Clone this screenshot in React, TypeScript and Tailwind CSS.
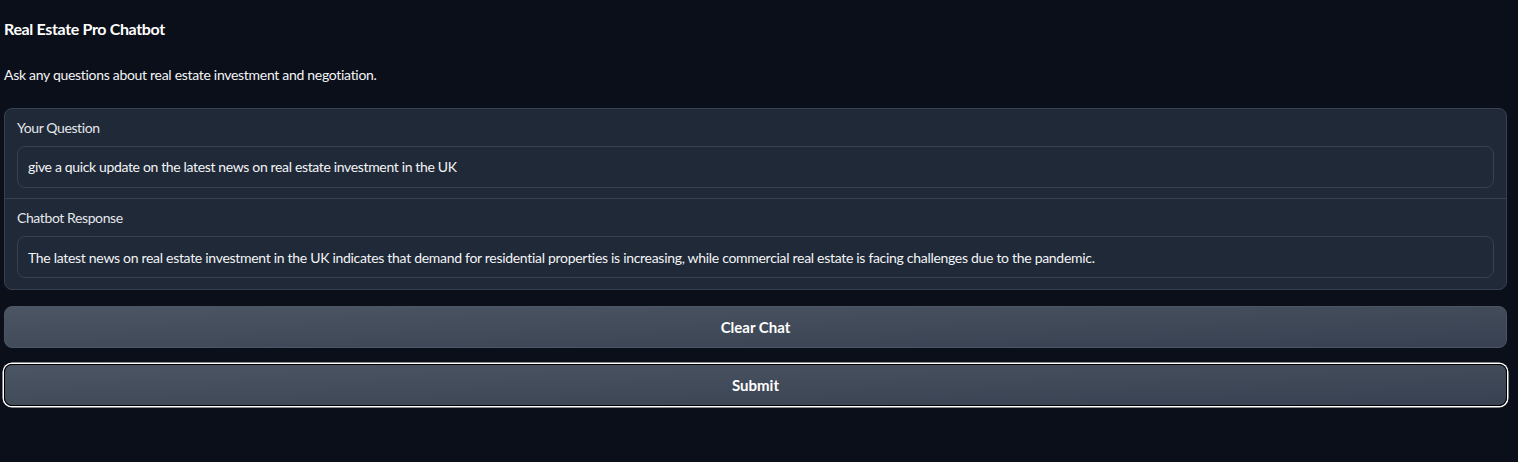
import React from "react";

export default function App() {
  return (
    <div className="min-h-screen w-full bg-[#0b0f19] pl-1 pr-[11px] pt-[18px] text-[#f3f4f6] font-['Lato','Noto_Sans',sans-serif]">
      <h1 className="text-[16px] leading-[22px] font-bold tracking-[-0.35px] text-white">Real Estate Pro Chatbot</h1>
      <p className="mt-[25px] text-[14px] leading-[20px] tracking-[-0.3px] text-[#f3f4f6]">
        Ask any questions about real estate investment and negotiation.
      </p>
      <div className="mt-[23px] rounded-lg border border-[#374151] bg-[#1f2937]">
        <div className="px-3 pt-[9px] pb-[10px]">
          <div className="text-[14px] leading-[20px] tracking-[-0.4px] text-[#e5e7eb]">Your Question</div>
          <div className="mt-[8px] flex h-[42px] items-center rounded-lg border border-[#374151] bg-[#1f2937] px-[10px] pb-[2px] text-[14px] tracking-[-0.35px] text-[#f3f4f6]">
            give a quick update on the latest news on real estate investment in the UK
          </div>
        </div>
        <div className="border-t border-[#374151] px-3 pt-[9px] pb-[11px]">
          <div className="text-[14px] leading-[20px] tracking-[-0.4px] text-[#e5e7eb]">Chatbot Response</div>
          <div className="mt-[8px] flex h-[42px] items-center rounded-lg border border-[#374151] bg-[#1f2937] px-[10px] text-[14px] tracking-[-0.3px] text-[#f3f4f6]">
            The latest news on real estate investment in the UK indicates that demand for residential properties is increasing, while commercial real estate is facing challenges due to the pandemic.
          </div>
        </div>
      </div>
      <button className="mt-[16px] flex h-[42px] w-full items-center justify-center rounded-lg border border-[#4b5563] bg-gradient-to-br from-[#4b5563] to-[#374151] text-[15px] font-bold text-white">
        Clear Chat
      </button>
      <button className="mt-[16px] flex h-[42px] w-full items-center justify-center rounded-lg border border-black bg-gradient-to-br from-[#4b5563] to-[#374151] text-[15px] font-bold text-white shadow-[0_0_0_1.5px_#ffffff]">
        Submit
      </button>
    </div>
  );
}
